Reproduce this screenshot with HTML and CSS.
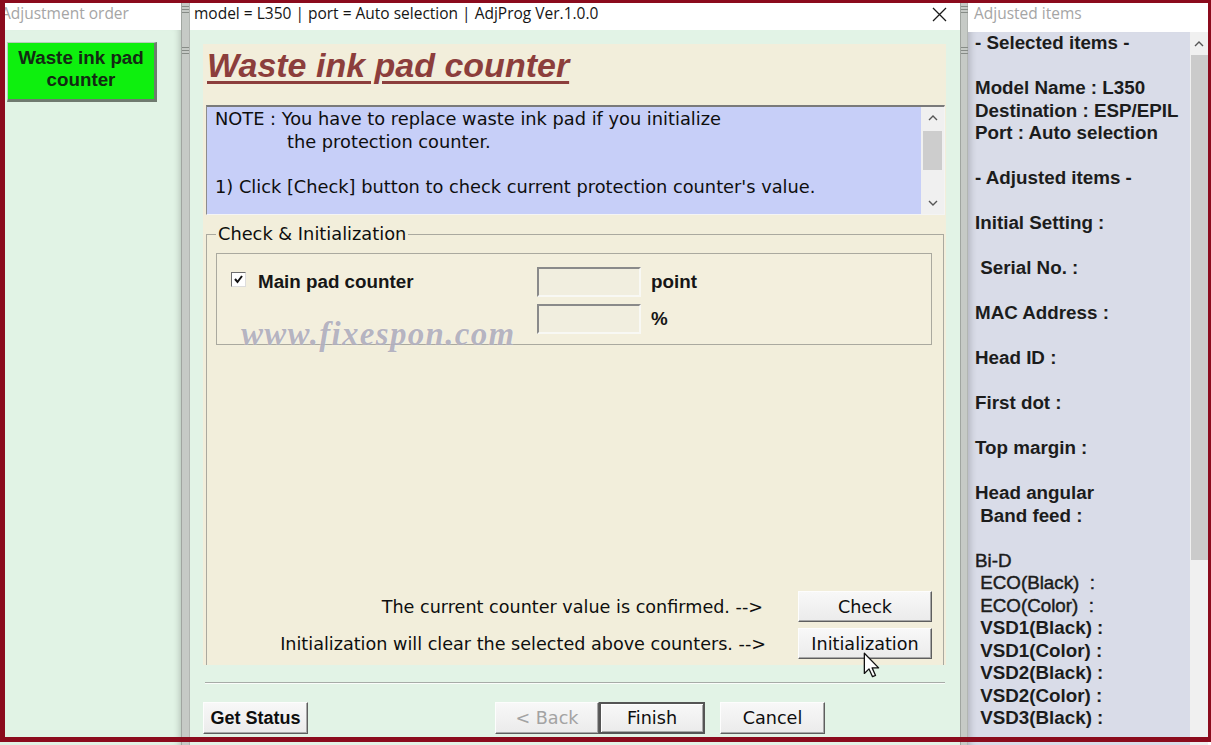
FILE: index.html
```html
<!DOCTYPE html>
<html lang="en">
<head>
<meta charset="utf-8">
<title>AdjProg - Waste ink pad counter</title>
<link rel="stylesheet" href="styles.css">
</head>
<body>
<div class="app">
  <section class="col col-left">
    <header class="pane-head muted head-left">Adjustment order</header>
    <div class="left-body">
      <button class="order-btn">Waste ink pad<br>counter</button>
    </div>
  </section>

  <div class="splitter"><span class="grip"></span><span class="grip grip-low"></span></div>

  <section class="col col-main">
    <header class="pane-head title-bar">
      <span>model = L350 | port = Auto selection | AdjProg Ver.1.0.0</span>
      <svg class="close-x" width="15" height="15" viewBox="0 0 15 15"><path d="M1 1 L14 14 M14 1 L1 14" stroke="#1a1a1a" stroke-width="1.3" fill="none"/></svg>
    </header>
    <div class="main-body">
      <div class="sheet">
        <h1 class="sheet-title">Waste ink pad counter</h1>
        <div class="note">
          <div class="note-text">
            <div>NOTE : You have to replace waste ink pad if you initialize</div>
            <div class="indent">the protection counter.</div>
            <div class="blank"></div>
            <div>1) Click [Check] button to check current protection counter's value.</div>
          </div>
          <div class="note-scroll">
            <span class="sb-arrow"><svg width="10" height="6" viewBox="0 0 10 6"><polyline points="1,5 5,1 9,5" fill="none" stroke="#555" stroke-width="1.4"/></svg></span>
            <span class="sb-thumb"></span>
            <span class="sb-fill"></span>
            <span class="sb-arrow"><svg width="10" height="6" viewBox="0 0 10 6"><polyline points="1,1 5,5 9,1" fill="none" stroke="#555" stroke-width="1.4"/></svg></span>
          </div>
        </div>

        <fieldset class="group">
          <legend>Check &amp; Initialization</legend>
          <div class="pads">
            <div class="pad-check">
              <span class="checkbox"><svg width="11" height="11" viewBox="0 0 11 11"><polyline points="2,5 4.5,8 9,2" fill="none" stroke="#111" stroke-width="2"/></svg></span>
              <span class="pad-label">Main pad counter</span>
            </div>
            <span class="field"></span>
            <span class="unit">point</span>
            <span></span>
            <span class="field"></span>
            <span class="unit">%</span>
          </div>
          <div class="actions">
            <span class="act-label first">The current counter value is confirmed. --&gt;</span>
            <button class="btn">Check</button>
            <span class="act-label">Initialization will clear the selected above counters. --&gt;</span>
            <button class="btn">Initialization</button>
          </div>
        </fieldset>

        <div class="watermark">www.fixespon.com</div>
        <svg class="cursor" width="17" height="26" viewBox="0 0 13 20"><path d="M1 1 L1 16.5 L4.6 13 L7.3 19 L9.6 18 L7 12.2 L12 12.2 Z" fill="#fff" stroke="#111" stroke-width="1" stroke-linejoin="round"/></svg>
      </div>
      <div class="sep"></div>
      <div class="nav">
        <button class="btn nav-btn bold">Get Status</button>
        <button class="btn nav-btn back" disabled>&lt; Back</button>
        <button class="btn nav-btn default">Finish</button>
        <button class="btn nav-btn cancel">Cancel</button>
      </div>
    </div>
  </section>

  <div class="splitter"><span class="grip grip-r"></span><span class="grip grip-low"></span></div>

  <section class="col col-right">
    <header class="pane-head muted head-right">Adjusted items</header>
    <div class="right-body">
<pre class="items">- Selected items -

Model Name : L350
Destination : ESP/EPIL
Port : Auto selection

- Adjusted items -

Initial Setting :

 Serial No. :

MAC Address :

Head ID :

First dot :

Top margin :

Head angular
 Band feed :

<span class="reg">Bi-D</span>
<span class="reg"> ECO(Black)  :</span>
<span class="reg"> ECO(Color)  :</span>
 VSD1(Black) :
 VSD1(Color) :
 VSD2(Black) :
 VSD2(Color) :
 VSD3(Black) :</pre>
      <div class="vscroll">
        <span class="vs-arrow"><svg width="10" height="6" viewBox="0 0 10 6"><polyline points="1,5 5,1 9,5" fill="none" stroke="#555" stroke-width="1.4"/></svg></span>
        <span class="vs-thumb"></span>
      </div>
    </div>
  </section>
</div>
<div class="frame"></div>
</body>
</html>
```

FILE: styles.css
```css
* { box-sizing: border-box; }
html, body { margin: 0; padding: 0; }
body {
  width: 1211px;
  height: 745px;
  overflow: hidden;
  position: relative;
  background: #fff;
  font-family: "DejaVu Sans", sans-serif;
  color: #111;
}
button { font-family: inherit; cursor: default; }

.app {
  display: grid;
  grid-template-columns: 181px 9px 770px 8px 243px;
  height: 745px;
}
.col { display: flex; flex-direction: column; min-width: 0; }

.pane-head {
  height: 30px;
  flex: none;
  background: #fff;
  font-family: "Open Sans", sans-serif;
  font-size: 15.5px;
  display: flex;
  align-items: center;
  padding-bottom: 4px;
  white-space: nowrap;
  overflow: hidden;
}
.muted { color: #a5a5a5; }
.head-left { padding-left: 1px; }
.head-right { padding-left: 6px; }
.title-bar {
  justify-content: space-between;
  padding-left: 4px;
  padding-right: 13px;
  color: #151515;
}
.close-x { margin-top: 2px; }

/* left pane */
.left-body {
  flex: 1;
  background: #e1f3e5;
  padding: 12px 0 0 7px;
  box-shadow: inset -7px 0 7px -6px rgba(0,0,0,0.22);
}
.order-btn {
  width: 150px;
  height: 60px;
  background: #0ef00e;
  border-style: solid;
  border-width: 1px 3px 3px 1px;
  border-color: #b9cdb9 #6f7a6f #6f7a6f #b9cdb9;
  font: bold 18.8px/22px "Liberation Sans", Arial, sans-serif;
  color: #132a13;
  padding: 0 0 5px 0;
}

/* splitters */
.splitter {
  background: #c6cac6;
  border-left: 1px solid #a0a5a0;
  border-right: 1px solid #b2b6b2;
  display: flex;
  flex-direction: column;
  align-items: center;
  padding-top: 6px;
}
.grip {
  width: 7px;
  height: 9px;
  background: repeating-linear-gradient(#878c87 0 1px, transparent 1px 3px);
}
.grip-low { margin-top: 32px; }

/* main pane */
.main-body {
  flex: 1;
  background: #e2f3e6;
  padding: 14px 14px 0 13px;
  display: flex;
  flex-direction: column;
}
.sheet {
  position: relative;
  width: 743px;
  height: 621px;
  flex: none;
  background: #f2eedb;
  padding: 1px 0 0 3px;
}
.sheet-title {
  margin: 0 0 20px 0;
  padding-left: 1px;
  font: italic bold 34px/40px "Liberation Sans", Arial, sans-serif;
  color: #8c3e3c;
  text-decoration: underline;
  text-decoration-thickness: 3px;
  text-underline-offset: 4px;
}

.note {
  display: flex;
  width: 739px;
  height: 110px;
  background: #c7cff8;
  border-style: solid;
  border-width: 2px 1px 1px 1px;
  border-color: #7a7a7a #f4f4f4 #f4f4f4 #8c8c8c;
}
.note-text {
  flex: 1;
  padding: 1px 0 0 8px;
  font-size: 17.8px;
  line-height: 22.5px;
  white-space: nowrap;
  color: #0e0e0e;
}
.note-text .indent { padding-left: 72px; }
.note-text .blank { height: 22.5px; }
.note-scroll {
  width: 23px;
  background: #f0f0f0;
  display: flex;
  flex-direction: column;
  align-items: center;
}
.sb-arrow {
  height: 22px;
  display: flex;
  align-items: center;
  justify-content: center;
  flex: none;
}
.sb-thumb {
  width: 19px;
  height: 39px;
  margin-top: 2px;
  background: #cdcdcd;
  flex: none;
}
.sb-fill { flex: 1; }

/* group */
.group {
  margin: 8px 0 0 0;
  width: 738px;
  height: 442px;
  padding: 0 11px 0 9px;
  border: 1px solid #aaa99f;
  border-bottom: none;
  min-width: 0;
}
.group legend {
  padding: 0 2px;
  font-size: 17.8px;
  line-height: 22px;
  color: #0e0e0e;
}
.pads {
  margin-top: 8px;
  height: 92px;
  border: 1px solid #aaa99f;
  background: #f3efdd;
  padding-top: 13px;
  display: grid;
  grid-template-columns: 310px 104px auto;
  grid-auto-rows: 30px;
  column-gap: 10px;
  row-gap: 7px;
  align-items: center;
}
.pad-check {
  display: flex;
  align-items: center;
  padding-left: 14px;
}
.checkbox {
  width: 15px;
  height: 15px;
  margin-top: -5px;
  background: #fff;
  border: 1px solid;
  border-color: #6e6e6e #dcdcdc #dcdcdc #6e6e6e;
  display: flex;
  align-items: center;
  justify-content: center;
}
.pad-label, .unit {
  font: bold 18.8px "Liberation Sans", Arial, sans-serif;
  color: #161616;
}
.pad-label { margin-left: 12px; }
.field {
  height: 30px;
  background: #f1eedf;
  border: 2px solid;
  border-color: #8a8a8a #f8f8f4 #f8f8f4 #8a8a8a;
}

.actions {
  margin-top: 246px;
  display: grid;
  grid-template-columns: 550px 134px;
  grid-auto-rows: 31px;
  column-gap: 32px;
  row-gap: 6px;
  align-items: center;
}
.act-label {
  text-align: right;
  font-size: 17.6px;
  white-space: nowrap;
  color: #0e0e0e;
}
.act-label.first { padding-right: 3px; }

.btn {
  height: 31px;
  padding: 0;
  font-size: 17.6px;
  color: #0e0e0e;
  background: linear-gradient(#f8f8f8, #ebebeb);
  border: 1px solid;
  border-color: #fdfdfd #5e5e5e #5e5e5e #fdfdfd;
  box-shadow: inset -1px -1px 0 #a8a8a8;
}

.watermark {
  position: absolute;
  left: 38px;
  top: 274px;
  font: italic bold 33px/33px "Liberation Serif", serif;
  letter-spacing: 1.3px;
  color: rgba(150, 148, 168, 0.7);
  text-shadow: 0 0 1px rgba(255,255,255,0.8);
  white-space: nowrap;
}
.cursor {
  position: absolute;
  left: 660px;
  top: 608px;
}

.sep {
  margin-top: 17px;
  margin-left: 2px;
  width: 740px;
  height: 2px;
  border-top: 1px solid #a7aba7;
  border-bottom: 1px solid #fbfdfb;
  flex: none;
}
.nav {
  margin-top: 18px;
  display: flex;
  height: 32px;
}
.nav-btn { height: 32px; }
.nav-btn.bold {
  width: 105px;
  font: bold 18px "Liberation Sans", Arial, sans-serif;
}
.nav-btn.back {
  width: 104px;
  margin-left: 187px;
  color: #a3a3a3;
}
.nav-btn.default {
  width: 106px;
  border: 2px solid #555;
  box-shadow: inset 1px 1px 0 #fff, inset -1px -1px 0 #a8a8a8;
}
.nav-btn.cancel {
  width: 105px;
  margin-left: 15px;
}

/* right pane */
.right-body {
  flex: 1;
  margin-top: 2px;
  padding-right: 3px;
  display: flex;
  min-height: 0;
}
.items {
  flex: 1;
  margin: 0;
  background: #d9dce8;
  padding-left: 7px;
  font: bold 18.8px/22.5px "Liberation Sans", Arial, sans-serif;
  color: #1c1c1c;
  white-space: pre;
  overflow: hidden;
  box-shadow: inset 8px 0 7px -6px rgba(0,0,0,0.2);
}
.items .reg {
  font-weight: normal;
  -webkit-text-stroke: 0.45px #1c1c1c;
}
.vscroll {
  width: 18px;
  background: #f0f0f0;
  display: flex;
  flex-direction: column;
  align-items: center;
}
.vs-arrow {
  height: 23px;
  display: flex;
  align-items: center;
  justify-content: center;
}
.vs-thumb {
  width: 17px;
  height: 505px;
  background: #cbcbcb;
}

.frame {
  position: absolute;
  left: 0;
  top: 0;
  width: 1211px;
  height: 742px;
  border-style: solid;
  border-color: #8b0b1d;
  border-width: 3px 3px 5px 5px;
  pointer-events: none;
}
```
